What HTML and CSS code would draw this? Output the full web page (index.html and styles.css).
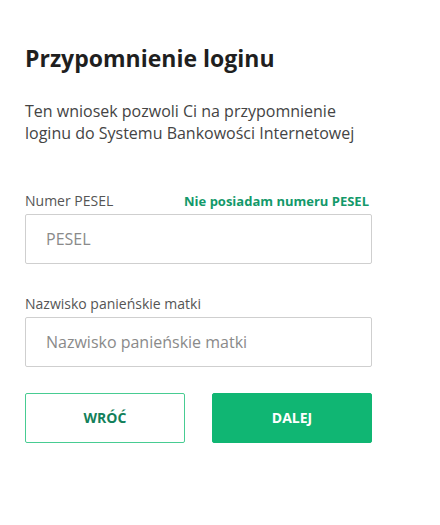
FILE: index.html
```html
<!DOCTYPE html>
<html lang="pl">
<head>
    <meta charset="utf-8" />
    <title>Przypomnienie loginu</title>
    <link rel="stylesheet" href="styles.css">
</head>
<body>
    <div class="remind">
        <h1 class="remind-title">Przypomnienie loginu</h1>
        <p class="remind-text">Ten wniosek pozwoli Ci na przypomnienie loginu do Systemu Bankowości Internetowej</p>

        <div class="field field-first">
            <div class="field-head">
                <label class="field-label" for="pesel">Numer PESEL</label>
                <a href="#" class="field-link">Nie posiadam numeru PESEL</a>
            </div>
            <input id="pesel" class="field-input" type="text" placeholder="PESEL">
        </div>

        <div class="field">
            <div class="field-head">
                <label class="field-label" for="nazwisko">Nazwisko panieńskie matki</label>
            </div>
            <input id="nazwisko" class="field-input" type="text" placeholder="Nazwisko panieńskie matki">
        </div>

        <div class="actions">
            <a href="#" class="btn btn-back">WRÓĆ</a>
            <a href="#" class="btn btn-next">DALEJ</a>
        </div>
    </div>
</body>
</html>
```

FILE: styles.css
```css
body {
    margin: 0;
    background: #fff;
    font-family: "Open Sans", "Noto Sans", sans-serif;
    color: #333;
}

.remind {
    width: 347px;
    padding: 42px 0 0 25px;
}

.remind-title {
    margin: 0;
    font-size: 23px;
    line-height: 32px;
    font-weight: 700;
    color: #1f1f1f;
}

.remind-text {
    margin: 26px 0 0;
    font-size: 16px;
    line-height: 22px;
    font-weight: 400;
    color: #444;
}

.field {
    margin-top: 31px;
}

.field-first {
    margin-top: 48px;
}

.field-head {
    display: flex;
    justify-content: space-between;
    align-items: baseline;
    height: 22px;
    line-height: 18px;
}

.field-label {
    font-size: 14px;
    color: #555;
}

.field-link {
    margin-right: 3px;
    font-size: 13px;
    font-weight: 700;
    color: #13996a;
    text-decoration: none;
}

.field-input {
    display: block;
    box-sizing: border-box;
    width: 100%;
    height: 50px;
    margin: 0;
    padding: 0 20px;
    border: 1px solid #cfcfcf;
    border-radius: 2px;
    font-family: inherit;
    font-size: 16px;
    color: #333;
    outline: none;
}

    .field-input::placeholder {
        color: #8a8a8a;
    }

.actions {
    display: flex;
    gap: 27px;
    margin-top: 26px;
}

.btn {
    flex: 1;
    box-sizing: border-box;
    height: 50px;
    line-height: 48px;
    text-align: center;
    text-decoration: none;
    font-size: 14px;
    font-weight: 700;
    border-radius: 2px;
    border: 1px solid #48cc92;
}

.btn-back {
    background: #fff;
    color: #13805a;
}

.btn-next {
    background: #10b673;
    border-color: #10b673;
    color: #fff;
}
```
